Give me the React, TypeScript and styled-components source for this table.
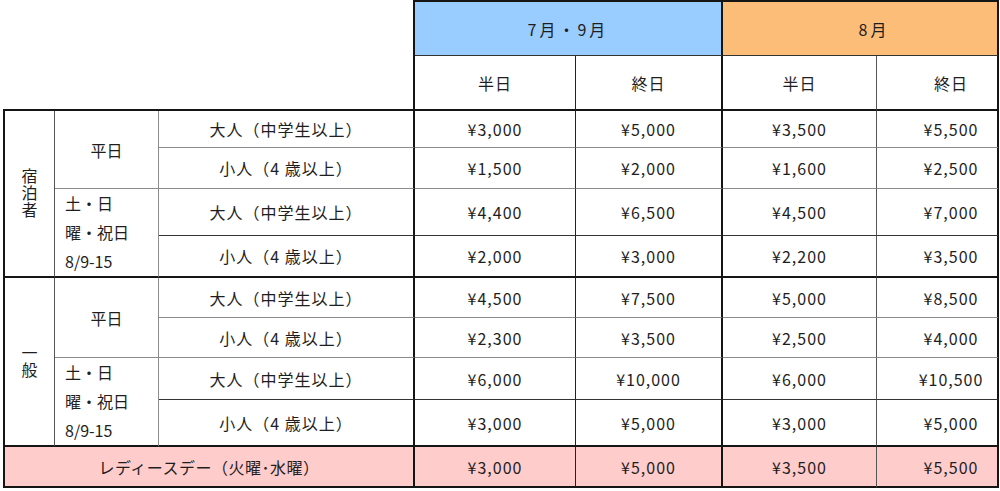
import React from "react";
import styled, { createGlobalStyle, css } from "styled-components";

const GlobalStyle = createGlobalStyle`
  html, body { margin: 0; padding: 0; background: #fff; }
  body { font-family: "Noto Sans CJK JP", "Noto Sans", sans-serif; }
`;

const THICK = "2px solid #151515";
const DARK = "1px solid #333";
const MID = "1px solid #555";
const GRAY = "1px solid #8c8c8c";

const Page = styled.div`
  padding: 0 0 0 3px;
`;

const Grid = styled.div`
  display: grid;
  grid-template-columns: 52px 104px 256px 161px 147px 154px 122px;
  grid-template-rows: 56px 55px 37px 41px 47px 42px 40px 40px 42px 47px 41px;
  width: 996px;
  font-family: "Noto Sans CJK JP", "Noto Sans", sans-serif;
  font-size: 16px;
  color: #1e1e1e;
`;

interface CellProps {
  $cs?: number;
  $rs?: number;
  $t?: string;
  $r?: string;
  $b?: string;
  $l?: string;
  $bg?: string;
  $shift?: boolean;
}

const cellBase = css<CellProps>`
  box-sizing: border-box;
  display: flex;
  align-items: center;
  justify-content: center;
  grid-column: span ${(p) => p.$cs ?? 1};
  grid-row: span ${(p) => p.$rs ?? 1};
  border-top: ${(p) => p.$t ?? "none"};
  border-right: ${(p) => p.$r ?? "none"};
  border-bottom: ${(p) => p.$b ?? "none"};
  border-left: ${(p) => p.$l ?? "none"};
  background: ${(p) => p.$bg ?? "#fff"};
  padding-left: ${(p) => (p.$shift ? "28px" : "0")};
  white-space: nowrap;
`;

const Blank = styled.div<CellProps>`
  ${cellBase}
`;

const MonthHeader = styled.div<CellProps>`
  ${cellBase}
  letter-spacing: 3px;
`;

const TermHeader = styled.div<CellProps>`
  ${cellBase}
  letter-spacing: 1px;
`;

const GroupCell = styled.div<CellProps>`
  ${cellBase}
`;

const VerticalText = styled.span`
  writing-mode: vertical-rl;
  text-orientation: upright;
  letter-spacing: 1px;
  line-height: 1;
`;

const DayCell = styled.div<CellProps & { $stacked?: boolean }>`
  ${cellBase}
  ${(p) =>
    p.$stacked &&
    css`
      flex-direction: column;
      align-items: flex-start;
      justify-content: center;
      padding-left: 10px;
      line-height: 29px;
    `}
`;

const TypeCell = styled.div<CellProps>`
  ${cellBase}
  letter-spacing: 1px;
`;

const Price = styled.div<CellProps>`
  ${cellBase}
  letter-spacing: 1px;
`;

const LadiesLabel = styled.div<CellProps>`
  ${cellBase}
  letter-spacing: 0.5px;
`;

const PINK = "#ffcccc";
const COL_RIGHT = ["1px solid #222", THICK, MID, THICK];

type Row = { type: string; prices: string[] };
type Group = { label: string; weekday: Row[]; holiday: Row[] };

const ADULT = "大人（中学生以上）";
const CHILD = "小人（4 歳以上）";

const groups: Group[] = [
  {
    label: "宿泊者",
    weekday: [
      { type: ADULT, prices: ["¥3,000", "¥5,000", "¥3,500", "¥5,500"] },
      { type: CHILD, prices: ["¥1,500", "¥2,000", "¥1,600", "¥2,500"] },
    ],
    holiday: [
      { type: ADULT, prices: ["¥4,400", "¥6,500", "¥4,500", "¥7,000"] },
      { type: CHILD, prices: ["¥2,000", "¥3,000", "¥2,200", "¥3,500"] },
    ],
  },
  {
    label: "一般",
    weekday: [
      { type: ADULT, prices: ["¥4,500", "¥7,500", "¥5,000", "¥8,500"] },
      { type: CHILD, prices: ["¥2,300", "¥3,500", "¥2,500", "¥4,000"] },
    ],
    holiday: [
      { type: ADULT, prices: ["¥6,000", "¥10,000", "¥6,000", "¥10,500"] },
      { type: CHILD, prices: ["¥3,000", "¥5,000", "¥3,000", "¥5,000"] },
    ],
  },
];

const ROW_BOTTOM = [GRAY, GRAY, DARK, THICK];

function PriceCells({ prices, bottom, bg }: { prices: string[]; bottom: string; bg?: string }) {
  return (
    <>
      {prices.map((p, i) => (
        <Price key={i} $r={COL_RIGHT[i]} $b={bottom} $bg={bg} $shift={i === 3}>
          {p}
        </Price>
      ))}
    </>
  );
}

export default function App() {
  return (
    <>
      <GlobalStyle />
      <Page>
        <Grid>
          <Blank $cs={3} $rs={2} $r={THICK} $b={THICK} />
          <MonthHeader $cs={2} $t={THICK} $r={THICK} $b={DARK} $bg="#99ccff">
            7月・9月
          </MonthHeader>
          <MonthHeader $cs={2} $t={THICK} $r={THICK} $b={DARK} $bg="#fbbd78" $shift>
            8月
          </MonthHeader>
          {["半日", "終日", "半日", "終日"].map((t, i) => (
            <TermHeader key={i} $r={COL_RIGHT[i]} $b={THICK} $shift={i === 3}>
              {t}
            </TermHeader>
          ))}

          {groups.map((g) => {
            const rows = [...g.weekday, ...g.holiday];
            return (
              <React.Fragment key={g.label}>
                {rows.map((row, ri) => (
                  <React.Fragment key={ri}>
                    {ri === 0 && (
                      <GroupCell $rs={4} $l={THICK} $r={MID} $b={THICK}>
                        <VerticalText>{g.label}</VerticalText>
                      </GroupCell>
                    )}
                    {ri === 0 && (
                      <DayCell $rs={2} $r={GRAY} $b={GRAY}>
                        平日
                      </DayCell>
                    )}
                    {ri === 2 && (
                      <DayCell $rs={2} $r={GRAY} $b={THICK} $stacked>
                        <span>土・日</span>
                        <span>曜・祝日</span>
                        <span>8/9-15</span>
                      </DayCell>
                    )}
                    <TypeCell $r={THICK} $b={ROW_BOTTOM[ri]}>
                      {row.type}
                    </TypeCell>
                    <PriceCells prices={row.prices} bottom={ROW_BOTTOM[ri]} />
                  </React.Fragment>
                ))}
              </React.Fragment>
            );
          })}

          <LadiesLabel $cs={3} $l={THICK} $r={THICK} $b={THICK} $bg={PINK}>
            レディースデー（火曜･水曜）
          </LadiesLabel>
          <PriceCells prices={["¥3,000", "¥5,000", "¥3,500", "¥5,500"]} bottom={THICK} bg={PINK} />
        </Grid>
      </Page>
    </>
  );
}
